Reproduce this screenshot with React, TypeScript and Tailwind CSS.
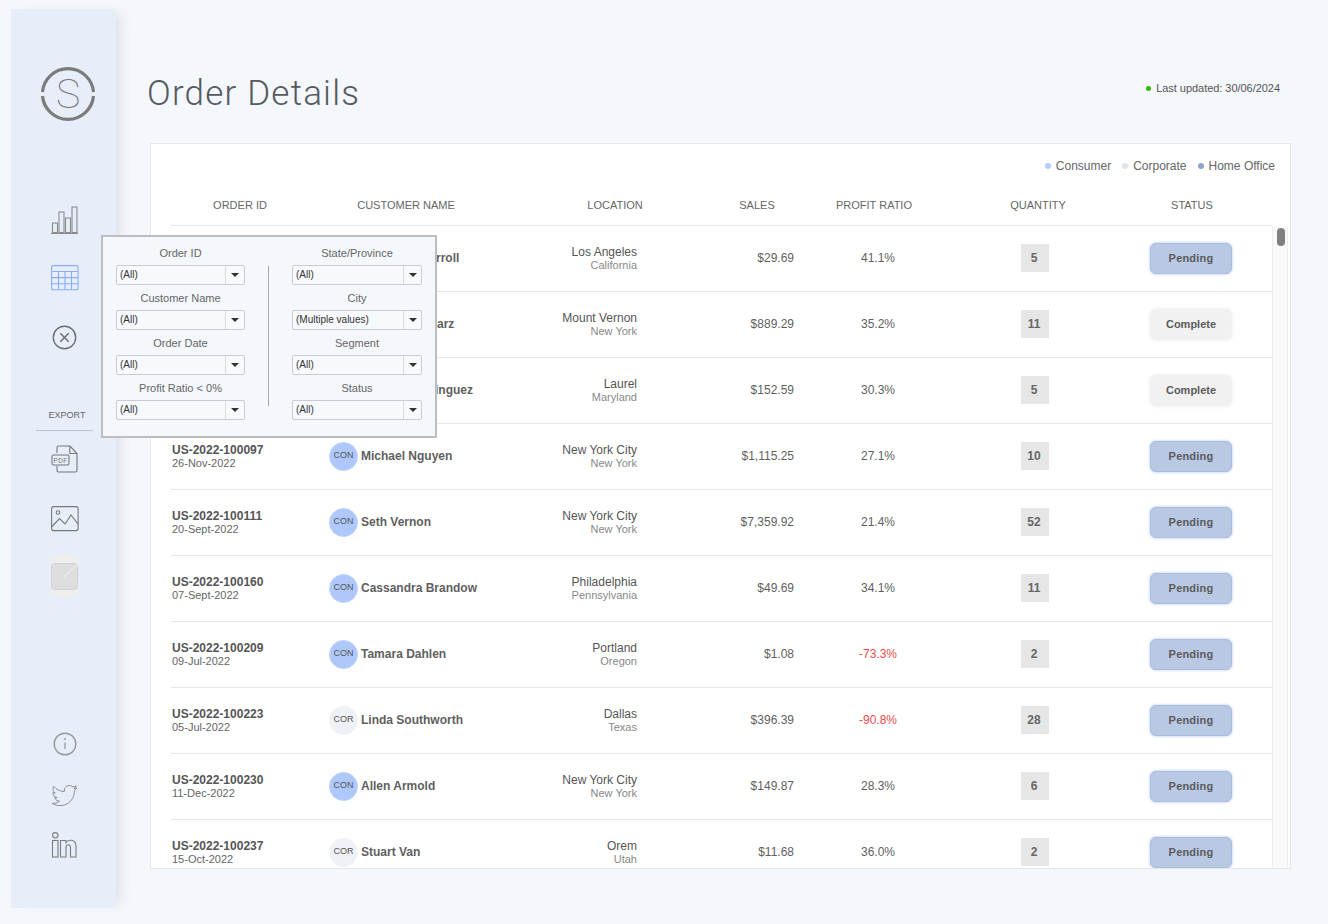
import React from 'react';

type Row = { id?: string; date?: string; seg?: 'CON' | 'COR'; name: string; namePad?: string; city: string; state: string; sales: string; ratio: string; qty: number; status: 'Pending' | 'Complete' };

const rows: Row[] = [
  { name: 'rroll', namePad: 'pl-[107px]', city: 'Los Angeles', state: 'California', sales: '$29.69', ratio: '41.1%', qty: 5, status: 'Pending' },
  { name: 'arz', namePad: 'pl-[108px]', city: 'Mount Vernon', state: 'New York', sales: '$889.29', ratio: '35.2%', qty: 11, status: 'Complete' },
  { name: 'inguez', namePad: 'pl-[106px]', city: 'Laurel', state: 'Maryland', sales: '$152.59', ratio: '30.3%', qty: 5, status: 'Complete' },
  { id: 'US-2022-100097', date: '26-Nov-2022', seg: 'CON', name: 'Michael Nguyen', city: 'New York City', state: 'New York', sales: '$1,115.25', ratio: '27.1%', qty: 10, status: 'Pending' },
  { id: 'US-2022-100111', date: '20-Sept-2022', seg: 'CON', name: 'Seth Vernon', city: 'New York City', state: 'New York', sales: '$7,359.92', ratio: '21.4%', qty: 52, status: 'Pending' },
  { id: 'US-2022-100160', date: '07-Sept-2022', seg: 'CON', name: 'Cassandra Brandow', city: 'Philadelphia', state: 'Pennsylvania', sales: '$49.69', ratio: '34.1%', qty: 11, status: 'Pending' },
  { id: 'US-2022-100209', date: '09-Jul-2022', seg: 'CON', name: 'Tamara Dahlen', city: 'Portland', state: 'Oregon', sales: '$1.08', ratio: '-73.3%', qty: 2, status: 'Pending' },
  { id: 'US-2022-100223', date: '05-Jul-2022', seg: 'COR', name: 'Linda Southworth', city: 'Dallas', state: 'Texas', sales: '$396.39', ratio: '-90.8%', qty: 28, status: 'Pending' },
  { id: 'US-2022-100230', date: '11-Dec-2022', seg: 'CON', name: 'Allen Armold', city: 'New York City', state: 'New York', sales: '$149.87', ratio: '28.3%', qty: 6, status: 'Pending' },
  { id: 'US-2022-100237', date: '15-Oct-2022', seg: 'COR', name: 'Stuart Van', city: 'Orem', state: 'Utah', sales: '$11.68', ratio: '36.0%', qty: 2, status: 'Pending' },
];

const headers = [
  ['ORDER ID', 'w-[138px]'],
  ['CUSTOMER NAME', 'w-[194px]'],
  ['LOCATION', 'w-[224px]'],
  ['SALES', 'w-[60px]'],
  ['PROFIT RATIO', 'w-[174px]'],
  ['QUANTITY', 'w-[154px]'],
  ['STATUS', 'w-[154px]'],
];

const leftFilters = [
  ['Order ID', '(All)'],
  ['Customer Name', '(All)'],
  ['Order Date', '(All)'],
  ['Profit Ratio < 0%', '(All)'],
];
const rightFilters = [
  ['State/Province', '(All)'],
  ['City', '(Multiple values)'],
  ['Segment', '(All)'],
  ['Status', '(All)'],
];

function Filter({ label, value, width, arrow }: { label: string; value: string; width: string; arrow: string }) {
  return (
    <div className={width}>
      <div className="h-[25px] pt-[2px] flex items-center justify-center text-[11px] text-[#666666]">{label}</div>
      <div className="h-[20px] flex border border-[#c9ccd1] rounded-[2px] bg-[#f7f9fd]">
        <div className="flex-1 pl-[3px] flex items-center text-[10px] text-[#333333] leading-none">{value}</div>
        <div className={`${arrow} border-l border-[#d9dbdf] flex items-center justify-center`}>
          <div className="w-0 h-0 border-l-[4px] border-r-[4px] border-t-[4px] border-l-transparent border-r-transparent border-t-[#333333]" />
        </div>
      </div>
    </div>
  );
}

function Logo() {
  return (
    <div className="relative w-[56px] h-[56px] -ml-[11px]">
      <svg width="56" height="56" viewBox="0 0 56 56" fill="none" stroke="#7b7b7b" strokeWidth="3.2">
        <path d="M2.5 26 A25.6 25.6 0 0 1 53.5 26" />
        <path d="M53.5 30 A25.6 25.6 0 0 1 2.5 30" />
      </svg>
      <span className="absolute inset-0 flex items-center justify-center font-['Roboto',sans-serif] font-thin text-[41px] text-[#777777] leading-none">S</span>
    </div>
  );
}

function BarsIcon() {
  return (
    <svg width="28" height="28" viewBox="0 0 28 28" fill="none" stroke="#8b8b8b" strokeWidth="1.1" className="mt-[84px]">
      <rect x="1.5" y="17" width="5" height="9.5" />
      <rect x="8" y="6" width="5" height="20.5" />
      <rect x="14.5" y="12" width="5" height="14.5" />
      <rect x="21" y="1" width="5" height="25.5" />
      <path d="M0 27.5H27" strokeWidth="1.2" />
    </svg>
  );
}

function TableIcon() {
  return (
    <svg width="28" height="26" viewBox="0 0 28 26" fill="none" stroke="#86aefc" strokeWidth="1.1" className="mt-[31px]">
      <rect x="0.6" y="0.6" width="26.5" height="24.2" rx="2" />
      <path d="M0.6 6.5H27M0.6 12.6H27M0.6 18.7H27M7.5 6.5V24.8M14 6.5V24.8M20.5 6.5V24.8" />
    </svg>
  );
}

function CloseIcon() {
  return (
    <svg width="26" height="26" viewBox="0 0 26 26" fill="none" stroke="#6f6f6f" className="mt-[34px] ml-[1px]">
      <circle cx="12.5" cy="12.5" r="11.2" strokeWidth="1.4" />
      <path d="M8.3 8.3L16.7 16.7M16.7 8.3L8.3 16.7" strokeWidth="1.5" />
    </svg>
  );
}

function PdfIcon() {
  return (
    <svg width="27" height="28" viewBox="0 0 27 28" fill="none" stroke="#777777" strokeWidth="1.1">
      <path d="M6 8V2.5A1.5 1.5 0 0 1 7.5 1H19l7 7.5v17A1.5 1.5 0 0 1 24.5 27H7.5A1.5 1.5 0 0 1 6 25.5V21" />
      <path d="M18.8 1V8.5H26" />
      <rect x="1" y="10" width="17" height="10" rx="1.5" fill="#e7eef9" />
      <text x="9.5" y="17.5" textAnchor="middle" fontSize="6.5" fontFamily="Liberation Sans, sans-serif" fill="#777777" stroke="none" letterSpacing="0.3">PDF</text>
    </svg>
  );
}

function ImageIcon() {
  return (
    <svg width="28" height="26" viewBox="0 0 28 26" fill="none" stroke="#777777" strokeWidth="1.1" className="mt-[33px]">
      <rect x="0.6" y="0.6" width="26.5" height="24" rx="2" />
      <circle cx="7" cy="6.5" r="1.8" />
      <path d="M1 20.5L8.5 12.5L14 18L20 9L27 18" />
    </svg>
  );
}

function GreyIcon() {
  return (
    <div className="mt-[24px] w-[27px] h-[40px] bg-[#efeeed] flex items-center">
      <svg width="27" height="27" viewBox="0 0 27 27" fill="none">
        <rect x="0.5" y="0.5" width="26" height="26" rx="3" fill="#dedede" stroke="#d2d2d2" />
        <path d="M13 14L27 1" stroke="#f2f2f2" strokeWidth="1" />
      </svg>
    </div>
  );
}

function InfoIcon() {
  return (
    <svg width="26" height="26" viewBox="0 0 26 26" fill="none" stroke="#999999" className="mt-[135px] ml-[1px]">
      <circle cx="13" cy="13" r="10.8" strokeWidth="1.4" />
      <path d="M13 11.5V18" strokeWidth="1.3" />
      <circle cx="13" cy="8" r="0.8" fill="#999999" strokeWidth="0.5" />
    </svg>
  );
}

function TwitterIcon() {
  return (
    <svg width="25" height="21" viewBox="0 0 24 20" fill="none" stroke="#7d7d7d" strokeWidth="0.8" className="mt-[28px] ml-[1px]">
      <path transform="translate(0 -2)" d="M23.953 4.57a10 10 0 01-2.825.775 4.958 4.958 0 002.163-2.723c-.951.555-2.005.959-3.127 1.184a4.92 4.92 0 00-8.384 4.482C7.69 8.095 4.067 6.13 1.64 3.162a4.822 4.822 0 00-.666 2.475c0 1.71.87 3.213 2.188 4.096a4.904 4.904 0 01-2.228-.616v.06a4.923 4.923 0 003.946 4.827 4.996 4.996 0 01-2.212.085 4.936 4.936 0 004.604 3.417 9.867 9.867 0 01-6.102 2.105c-.39 0-.779-.023-1.17-.067a13.995 13.995 0 007.557 2.209c9.053 0 13.998-7.496 13.998-13.985 0-.21 0-.42-.015-.63A9.935 9.935 0 0024 4.59z" />
    </svg>
  );
}

function LinkedinIcon() {
  return (
    <svg width="26" height="26" viewBox="0 0 26 26" fill="none" stroke="#7d7d7d" strokeWidth="1.1" className="mt-[26px]">
      <circle cx="4.3" cy="3.3" r="2.7" />
      <rect x="1.5" y="8.5" width="5.5" height="16.5" />
      <path d="M9.5 8.5H15V10.5C16.5 8.5 18.5 8 20.5 8.3C23.5 8.8 25 11 25 14.5V25H19.5V15.5C19.5 13.5 18.5 12.7 17.3 12.7C16 12.7 15 13.7 15 15.5V25H9.5Z" />
    </svg>
  );
}

function TableRow({ r }: { r: Row }) {
  const neg = r.ratio.startsWith('-');
  return (
    <div className="h-[66px] shrink-0 flex items-center border-b border-[#e4e6e9]">
      <div className="w-[158px] pl-[1px]">
        {r.id && <div className="text-[12px] leading-[13px] font-bold text-[#555555]">{r.id}</div>}
        {r.date && <div className="text-[11px] leading-[13px] text-[#666666]">{r.date}</div>}
      </div>
      <div className={`w-[211px] flex items-center gap-[3px] ${r.namePad ?? ''}`}>
        {r.seg && (
          <div className={`w-[29px] h-[29px] rounded-full flex items-center justify-center text-[9px] text-[#555555] -mt-[1px] ${r.seg === 'CON' ? 'bg-[#aec8fb] border border-[#bdd2fb]' : 'bg-[#eef1f6] border border-[#f0f2f6]'}`}>{r.seg}</div>
        )}
        <div className="text-[12px] font-bold text-[#5f5f5f] -mt-[2px]">{r.name}</div>
      </div>
      <div className="w-[97px] text-right">
        <div className="text-[12px] leading-[13px] text-[#555555]">{r.city}</div>
        <div className="text-[11px] leading-[13px] text-[#888888]">{r.state}</div>
      </div>
      <div className="w-[157px] text-right text-[12px] text-[#5f5f5f] -mt-[1px]">{r.sales}</div>
      <div className={`w-[168px] text-center text-[12px] -mt-[1px] ${neg ? 'text-[#f04a4a]' : 'text-[#5f5f5f]'}`}>{r.ratio}</div>
      <div className="w-[146px] flex justify-center -mt-[1px]">
        <div className="w-[28px] h-[28px] pr-[2px] pb-[1px] bg-[#e6e6e6] flex items-center justify-center text-[12px] font-bold text-[#666666]">{r.qty}</div>
      </div>
      <div className="w-[164px] flex justify-center pl-[2px] -mt-[1px]">
        {r.status === 'Pending' ? (
          <div className="w-[82px] h-[31px] pt-[1px] rounded-[6px] bg-[#b9c8e3] border-[1.5px] border-[#a9bde3] shadow-[0_0_3px_rgba(150,175,225,0.8)] flex items-center justify-center text-[11px] font-bold text-[#5b5b5b] tracking-[0.2px]">Pending</div>
        ) : (
          <div className="w-[82px] h-[31px] pt-[1px] rounded-[6px] bg-[#f1f1f1] shadow-[0_0_4px_rgba(0,0,0,0.08)] flex items-center justify-center text-[11px] font-bold text-[#5b5b5b]">Complete</div>
        )}
      </div>
    </div>
  );
}

export default function App() {
  return (
    <div className="relative w-[1328px] h-[924px] overflow-hidden bg-[#f4f7fc] pt-[9px] pl-[11px] flex items-start font-['Liberation_Sans',Arial,sans-serif]">
      <aside className="w-[105px] h-[899px] shrink-0 bg-[#e7eef9] shadow-[10px_0_12px_-4px_rgba(0,0,0,0.08)] pt-[57px] pl-[40px] flex flex-col items-start">
        <Logo />
        <BarsIcon />
        <TableIcon />
        <CloseIcon />
        <div className="mt-[58px] -ml-[15px] w-[57px] h-[22px] pl-[5px] pt-[1px] flex items-start justify-center border-b border-[#bfc3c9] text-[9px] text-[#666666] leading-[11px]">EXPORT</div>
        <div className="mt-[14px] h-[28px]"><PdfIcon /></div>
        <ImageIcon />
        <GreyIcon />
        <InfoIcon />
        <TwitterIcon />
        <LinkedinIcon />
      </aside>

      <main className="ml-[32px] w-[1143px] shrink-0 -mt-[9px]">
        <div className="h-[143px] pt-[72px] flex items-start justify-between">
          <h1 className="-ml-[1px] font-['Roboto',sans-serif] font-light text-[35px] leading-[44px] tracking-[1.2px] text-[#555a60]">Order Details</h1>
          <div className="flex items-center gap-[5px] mt-[8px] mr-[11px] text-[11px] tracking-[-0.04px] text-[#555555]">
            <span className="w-[5px] h-[5px] rounded-full bg-[#2fbb05]" />
            Last updated: 30/06/2024
          </div>
        </div>

        <div className="ml-[2px] w-[1141px] h-[726px] bg-white border border-[#e3e6ea] overflow-hidden flex flex-col">
          <div className="h-[44px] shrink-0 flex items-center justify-end gap-[11px] pr-[15px] text-[12px] text-[#666666]">
            <div className="flex items-center gap-[5px]"><span className="w-[6px] h-[6px] rounded-full bg-[#b3cdf9]" />Consumer</div>
            <div className="flex items-center gap-[5px]"><span className="w-[6px] h-[6px] rounded-full bg-[#e0e4ea]" />Corporate</div>
            <div className="flex items-center gap-[5px]"><span className="w-[6px] h-[6px] rounded-full bg-[#8fa3c8]" />Home Office</div>
          </div>
          <div className="h-[38px] shrink-0 ml-[20px] w-[1101px] flex items-center pb-[3px] border-b border-[#e4e6e9] text-[11px] text-[#666666]">
            {headers.map(([t, w]) => (
              <div key={t} className={`${w} text-center`}>{t}</div>
            ))}
          </div>
          <div className="flex flex-1 min-h-0 ml-[20px]">
            <div className="w-[1101px] flex flex-col overflow-hidden">
              {rows.map((r) => (
                <TableRow key={r.city + r.sales} r={r} />
              ))}
            </div>
            <div className="w-[16px] bg-[#fafafa] border-l border-r border-[#eeeeee] pl-[4px] pt-[2px]">
              <div className="w-[8px] h-[18px] rounded-[4px] bg-[#808080]" />
            </div>
          </div>
        </div>
      </main>

      <div className="absolute left-[101px] top-[235px] w-[336px] h-[203px] bg-[#f4f7fc] border-2 border-[#bdbdbd] pl-[13px] pt-[3px] flex">
        <div className="flex flex-col">
          {leftFilters.map(([l, v]) => (
            <Filter key={l} label={l} value={v} width="w-[129px]" arrow="w-[19px]" />
          ))}
        </div>
        <div className="w-px h-[140px] bg-[#aaaaaa] mt-[26px] ml-[23px] mr-[23px]" />
        <div className="flex flex-col">
          {rightFilters.map(([l, v]) => (
            <Filter key={l} label={l} value={v} width="w-[130px]" arrow="w-[18px]" />
          ))}
        </div>
      </div>
    </div>
  );
}
